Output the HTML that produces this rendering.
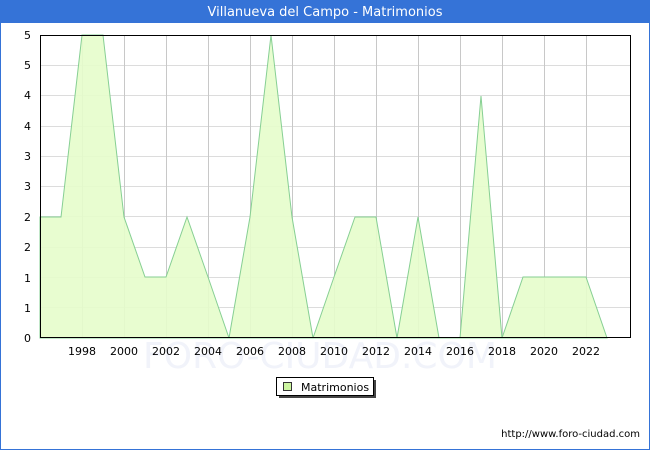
<!DOCTYPE html>
<html><head><meta charset="utf-8"><style>
body{margin:0;width:650px;height:450px;overflow:hidden;background:#fff;font-family:"DejaVu Sans","Liberation Sans",sans-serif}
</style></head><body>
<svg width="650" height="450" xmlns="http://www.w3.org/2000/svg" font-family="DejaVu Sans, Liberation Sans, sans-serif">
<rect x="0.5" y="0.5" width="649" height="449" fill="#fff" stroke="#3573d7"/>
<rect x="0" y="0" width="650" height="23" fill="#3573d7"/>
<text x="325" y="16" fill="#fff" font-size="13" text-anchor="middle">Villanueva del Campo - Matrimonios</text>
<text x="320" y="368" fill="#f1f3fa" font-size="36" text-anchor="middle">FORO-CIUDAD.COM</text>
<g stroke="#dcdcdc" stroke-width="1">
<line x1="40" y1="307.5" x2="631" y2="307.5"/><line x1="40" y1="277.5" x2="631" y2="277.5"/><line x1="40" y1="247.5" x2="631" y2="247.5"/><line x1="40" y1="216.5" x2="631" y2="216.5"/><line x1="40" y1="186.5" x2="631" y2="186.5"/><line x1="40" y1="156.5" x2="631" y2="156.5"/><line x1="40" y1="126.5" x2="631" y2="126.5"/><line x1="40" y1="95.5" x2="631" y2="95.5"/><line x1="40" y1="65.5" x2="631" y2="65.5"/>
</g>
<g stroke="#c8c8c8">
<line x1="82.5" y1="35" x2="82.5" y2="338"/><line x1="124.5" y1="35" x2="124.5" y2="338"/><line x1="166.5" y1="35" x2="166.5" y2="338"/><line x1="208.5" y1="35" x2="208.5" y2="338"/><line x1="250.5" y1="35" x2="250.5" y2="338"/><line x1="292.5" y1="35" x2="292.5" y2="338"/><line x1="334.5" y1="35" x2="334.5" y2="338"/><line x1="376.5" y1="35" x2="376.5" y2="338"/><line x1="418.5" y1="35" x2="418.5" y2="338"/><line x1="460.5" y1="35" x2="460.5" y2="338"/><line x1="502.5" y1="35" x2="502.5" y2="338"/><line x1="544.5" y1="35" x2="544.5" y2="338"/><line x1="586.5" y1="35" x2="586.5" y2="338"/>
</g>
<polygon fill="#e5fdcb" fill-opacity="0.9" stroke="#86cf93" stroke-width="1" points="40,338 40,217 61,217 82,35 103,35 124,217 145,277 166,277 187,217 208,277 229,338 250,217 271,35 292,217 313,338 334,277 355,217 376,217 397,338 418,217 439,338 460,338 481,96 502,338 523,277 544,277 565,277 586,277 607,338"/>
<rect x="40.5" y="35.5" width="590" height="302" fill="none" stroke="#000"/>
<g font-size="11" fill="#000" text-anchor="end">
<text x="31" y="342">0</text><text x="31" y="312">1</text><text x="31" y="282">1</text><text x="31" y="251">2</text><text x="31" y="221">2</text><text x="31" y="190">3</text><text x="31" y="160">3</text><text x="31" y="130">4</text><text x="31" y="99">4</text><text x="31" y="69">5</text><text x="31" y="39">5</text>
</g>
<g font-size="11" fill="#000" text-anchor="middle">
<text x="82" y="355">1998</text><text x="124" y="355">2000</text><text x="166" y="355">2002</text><text x="208" y="355">2004</text><text x="250" y="355">2006</text><text x="292" y="355">2008</text><text x="334" y="355">2010</text><text x="376" y="355">2012</text><text x="418" y="355">2014</text><text x="460" y="355">2016</text><text x="502" y="355">2018</text><text x="544" y="355">2020</text><text x="586" y="355">2022</text>
</g>
<rect x="279" y="380" width="97" height="18" fill="#444"/>
<rect x="276.5" y="377.5" width="97" height="18" fill="#fff" stroke="#000"/>
<rect x="283.5" y="382.5" width="8" height="8" fill="#ccf5a0" stroke="#333"/>
<text x="301" y="391" font-size="11">Matrimonios</text>
<text x="640" y="437" font-size="10" text-anchor="end">http://www.foro-ciudad.com</text>
</svg>
</body></html>
